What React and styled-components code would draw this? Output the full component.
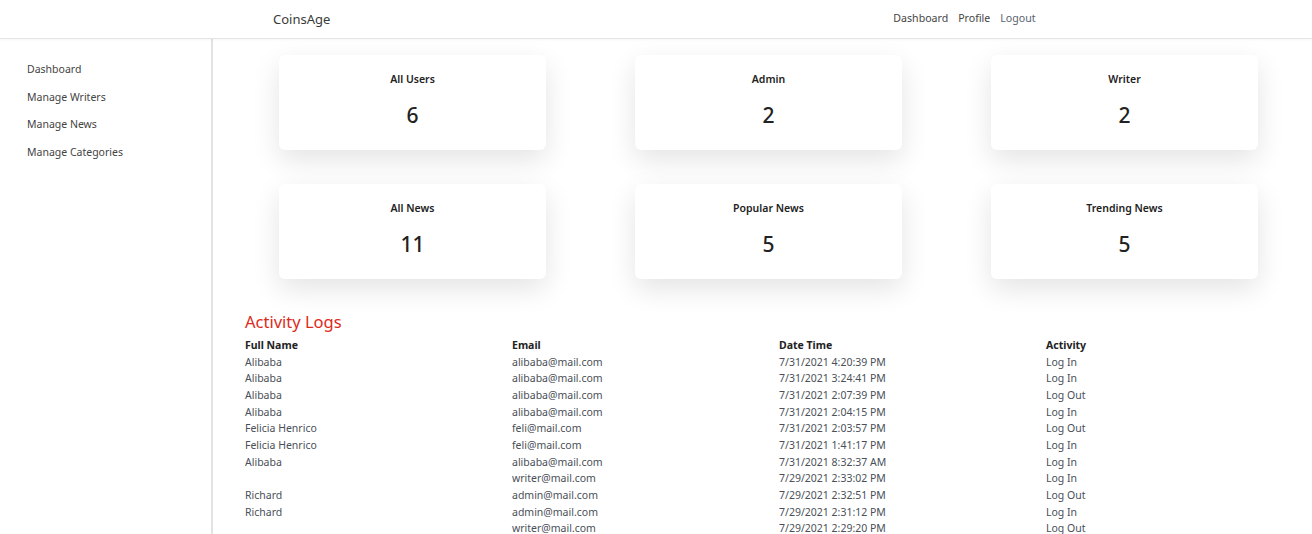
import React from 'react'
import styled, { createGlobalStyle } from 'styled-components'

const GlobalStyle = createGlobalStyle`
  html, body {
    margin: 0;
    padding: 0;
    background: #fff;
    font-family: "Noto Sans", "Open Sans", sans-serif;
    color: #343a40;
  }
  * { box-sizing: border-box; }
`

const Page = styled.div`
  width: 1312px;
  height: 534px;
  overflow: hidden;
  display: flex;
  flex-direction: column;
`

const Navbar = styled.nav`
  height: 39px;
  flex: none;
  display: flex;
  align-items: center;
  padding: 0 0 2px 273px;
  border-bottom: 1px solid #e3e3e8;
  box-shadow: 0 1px 3px rgba(0,0,0,.04);
  position: relative;
  z-index: 2;
`

const Brand = styled.span`
  font-size: 13px;
  color: #3a3a3a;
  margin-top: 2px;
`

const NavLinks = styled.div`
  margin-left: 563px;
  display: flex;
  gap: 10px;
  font-size: 10.6px;
  color: #444;
`

const NavLink = styled.span`
  color: ${({ muted }) => (muted ? '#5a6270' : '#444')};
`

const Body = styled.div`
  flex: 1;
  display: flex;
  min-height: 0;
`

const Sidebar = styled.aside`
  width: 213px;
  flex: none;
  padding: 22px 0 0 27px;
  border-right: 2px solid #e2e2e2;
  display: flex;
  flex-direction: column;
  gap: 10.7px;
`

const SideLink = styled.a`
  font-size: 10.5px;
  color: #444;
  line-height: 17px;
`

const Main = styled.main`
  flex: 1;
  padding: 16px 0 0 32px;
`

const CardGrid = styled.div`
  display: grid;
  grid-template-columns: repeat(3, 267px);
  column-gap: 89px;
  row-gap: 34px;
  padding-left: 34px;
`

const Card = styled.div`
  height: 95px;
  background: #fff;
  border-radius: 6px;
  box-shadow: 0 10px 28px rgba(0,0,0,.11);
  display: flex;
  flex-direction: column;
  align-items: center;
  padding-top: 17px;
`

const CardTitle = styled.div`
  font-size: 10.5px;
  font-weight: 600;
  color: #222;
`

const CardValue = styled.div`
  font-size: 21px;
  font-weight: 500;
  color: #222;
  margin-top: 15px;
`

const LogTitle = styled.h2`
  margin: 32px 0 4px;
  font-size: 16.5px;
  font-weight: 400;
  color: #dd2a1b;
  line-height: 22px;
`

const Table = styled.div`
  display: grid;
  grid-template-columns: repeat(4, 267px);
  font-size: 10.5px;
  line-height: 16.65px;
  color: #4a4f58;
`

const HeadCell = styled.div`
  font-weight: 700;
  color: #222;
`

const Cell = styled.div`
  min-height: 16.65px;
`

const stats = [
  { title: 'All Users', value: 6 },
  { title: 'Admin', value: 2 },
  { title: 'Writer', value: 2 },
  { title: 'All News', value: 11 },
  { title: 'Popular News', value: 5 },
  { title: 'Trending News', value: 5 },
]

const logs = [
  ['Alibaba', 'alibaba@mail.com', '7/31/2021 4:20:39 PM', 'Log In'],
  ['Alibaba', 'alibaba@mail.com', '7/31/2021 3:24:41 PM', 'Log In'],
  ['Alibaba', 'alibaba@mail.com', '7/31/2021 2:07:39 PM', 'Log Out'],
  ['Alibaba', 'alibaba@mail.com', '7/31/2021 2:04:15 PM', 'Log In'],
  ['Felicia Henrico', 'feli@mail.com', '7/31/2021 2:03:57 PM', 'Log Out'],
  ['Felicia Henrico', 'feli@mail.com', '7/31/2021 1:41:17 PM', 'Log In'],
  ['Alibaba', 'alibaba@mail.com', '7/31/2021 8:32:37 AM', 'Log In'],
  ['', 'writer@mail.com', '7/29/2021 2:33:02 PM', 'Log In'],
  ['Richard', 'admin@mail.com', '7/29/2021 2:32:51 PM', 'Log Out'],
  ['Richard', 'admin@mail.com', '7/29/2021 2:31:12 PM', 'Log In'],
  ['', 'writer@mail.com', '7/29/2021 2:29:20 PM', 'Log Out'],
]

const App = () => {
  return (
    <Page>
      <GlobalStyle />
      <Navbar>
        <Brand>CoinsAge</Brand>
        <NavLinks>
          <NavLink>Dashboard</NavLink>
          <NavLink>Profile</NavLink>
          <NavLink muted>Logout</NavLink>
        </NavLinks>
      </Navbar>
      <Body>
        <Sidebar>
          <SideLink>Dashboard</SideLink>
          <SideLink>Manage Writers</SideLink>
          <SideLink>Manage News</SideLink>
          <SideLink>Manage Categories</SideLink>
        </Sidebar>
        <Main>
          <CardGrid>
            {stats.map(s => (
              <Card key={s.title}>
                <CardTitle>{s.title}</CardTitle>
                <CardValue>{s.value}</CardValue>
              </Card>
            ))}
          </CardGrid>
          <LogTitle>Activity Logs</LogTitle>
          <Table>
            <HeadCell>Full Name</HeadCell>
            <HeadCell>Email</HeadCell>
            <HeadCell>Date Time</HeadCell>
            <HeadCell>Activity</HeadCell>
            {logs.map((row, i) =>
              row.map((c, j) => <Cell key={i + '-' + j}>{c}</Cell>)
            )}
          </Table>
        </Main>
      </Body>
    </Page>
  )
}

export default App
